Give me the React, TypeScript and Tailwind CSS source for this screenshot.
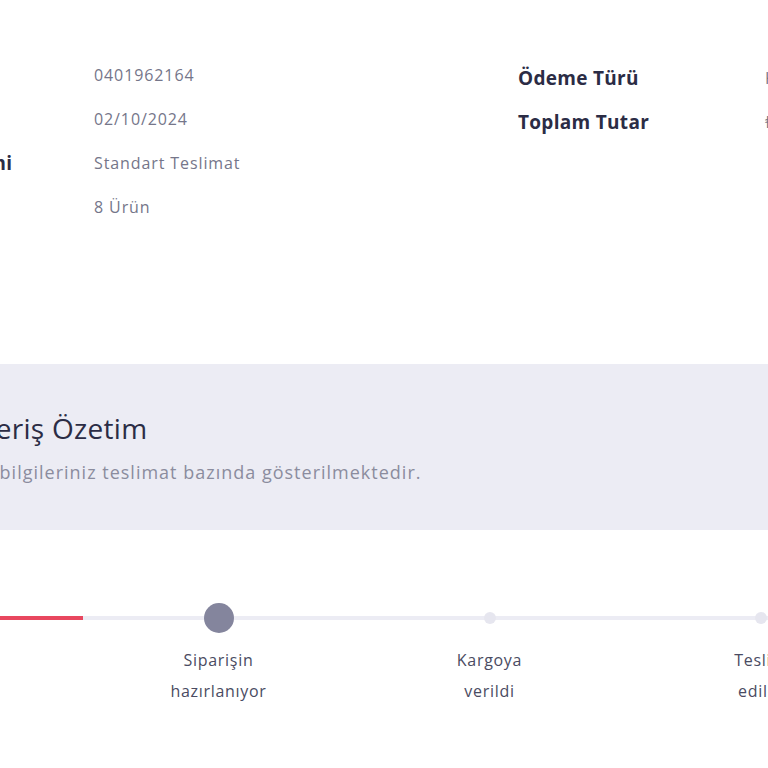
const steps = [
  { label: ['Siparişin', 'alındı'], state: 'done' },
  { label: ['Siparişin', 'hazırlanıyor'], state: 'current' },
  { label: ['Kargoya', 'verildi'], state: 'todo' },
  { label: ['Teslim', 'edildi'], state: 'todo' },
]

function InfoRow({ label, value, wide }: { label: string; value: string; wide?: boolean }) {
  return (
    <div className="flex h-[44px] items-center">
      <div className={`${wide ? 'w-[253px]' : 'w-[247px]'} shrink-0 text-[19px] font-bold tracking-[0.3px] text-[#2b2c45]`}>{label}</div>
      <div className="text-[16px] tracking-[0.9px] text-[#75768a]">{value}</div>
    </div>
  )
}

export default function App() {
  return (
    <div className="h-[768px] w-[768px] overflow-hidden bg-white" style={{ fontFamily: '"Open Sans", "Noto Sans", sans-serif' }}>
      <div className="ml-[-153px] w-[1200px]">
        {/* order info */}
        <div className="flex h-[364px] pt-[53px]">
          <div className="ml-[-6px] w-[677px] shrink-0">
            <InfoRow wide label="Sipariş No" value="0401962164" />
            <InfoRow wide label="Sipariş Tarihi" value="02/10/2024" />
            <InfoRow wide label="Teslimat Yöntemi" value="Standart Teslimat" />
            <InfoRow wide label="Ürün Sayısı" value="8 Ürün" />
          </div>
          <div className="pt-[3px]">
            <InfoRow label="Ödeme Türü" value="Kredi Kartı" />
            <InfoRow label="Toplam Tutar" value="₺1.249,90" />
          </div>
        </div>

        {/* summary band */}
        <div className="flex h-[166px] w-[1200px] flex-col justify-center bg-[#ececf4] pl-[88px]">
          <h2 className="text-[28px] leading-[36px] font-normal tracking-[0.3px] text-[#2b2c45]">Alışveriş Özetim</h2>
          <p className="mt-[13px] ml-[-4px] text-[18px] leading-[26px] tracking-[1px] text-[#8b8c9e]">
            Sipariş bilgileriniz teslimat bazında gösterilmektedir.
          </p>
        </div>

        {/* progress */}
        <div className="ml-[-35px] flex pt-[72px]">
          {steps.map((s, i) => (
            <div key={i} className="flex w-[271px] shrink-0 flex-col items-center">
              <div className="relative flex h-[32px] w-full items-center">
                <div className={`h-[4px] flex-1 ${i === 0 ? 'bg-transparent' : 'bg-[#ececf4]'}`} />
                <div className={`h-[4px] flex-1 ${s.state === 'done' ? 'bg-[#e8475f]' : 'bg-[#ececf4]'}`} />
                <div
                  className={`absolute left-1/2 top-1/2 -translate-x-1/2 -translate-y-1/2 rounded-full ${
                    s.state === 'current'
                      ? 'h-[30px] w-[30px] bg-[#84859d]'
                      : s.state === 'done'
                        ? 'h-[30px] w-[30px] bg-[#e8475f]'
                        : 'h-[12px] w-[12px] bg-[#e6e6ef]'
                  }`}
                />
              </div>
              <div className="mt-[11px] text-center text-[16px] leading-[31px] tracking-[0.7px] text-[#4a4b62]">
                <div>{s.label[0]}</div>
                <div>{s.label[1]}</div>
              </div>
            </div>
          ))}
        </div>
      </div>
    </div>
  )
}
